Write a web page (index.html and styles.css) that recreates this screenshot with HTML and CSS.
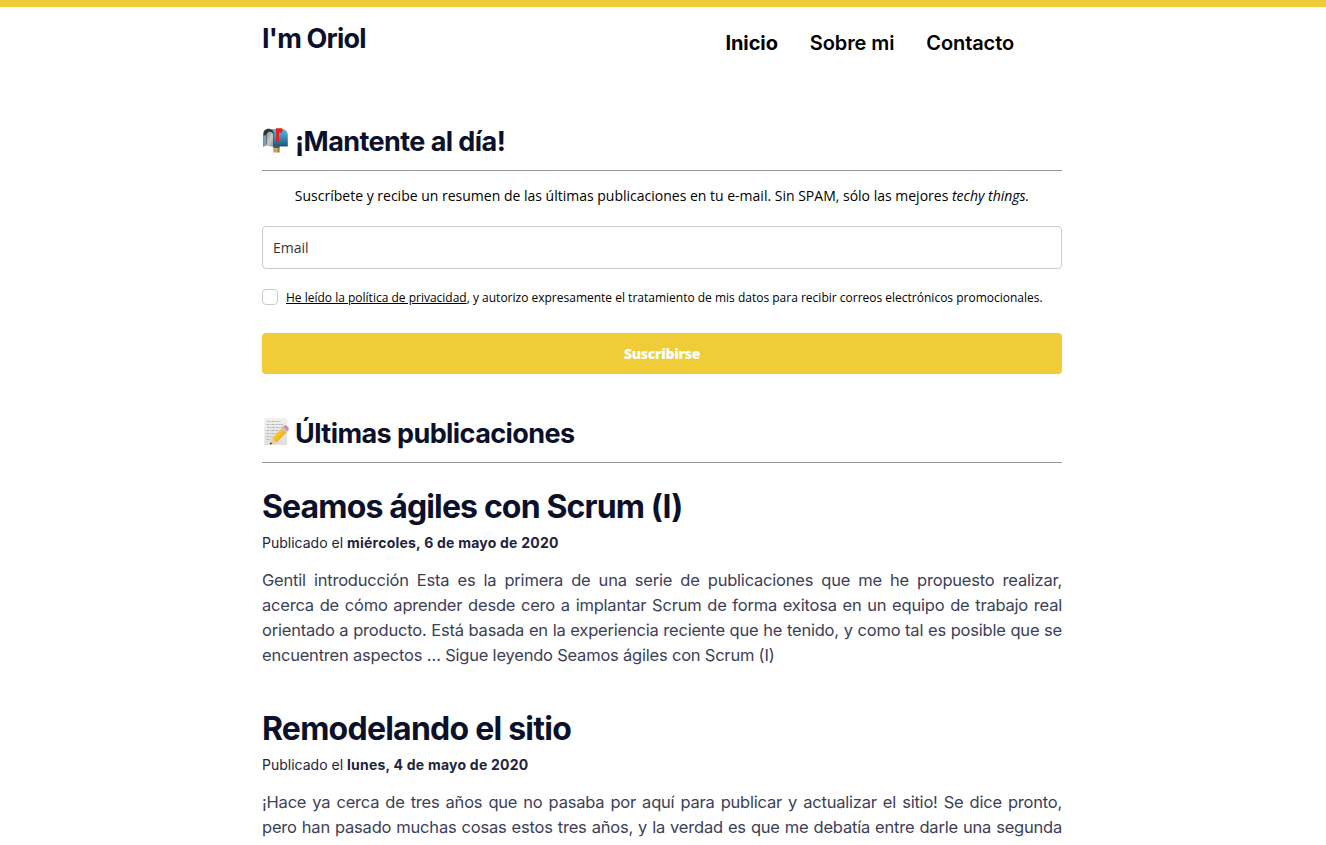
FILE: index.html
```html
<!DOCTYPE html>
<html lang="es">
<head>
<meta charset="utf-8">
<title>I'm Oriol</title>
<link rel="stylesheet" href="styles.css">
</head>
<body>
<div class="page">
  <header class="header">
    <a class="brand">I'm Oriol</a>
    <nav class="nav"><a class="current">Inicio</a><a class="about">Sobre mi</a><a class="contact">Contacto</a></nav>
  </header>
  <main>
    <section class="subscribe">
      <h2 class="section-title">
        <svg class="emoji" viewBox="0 0 28 28" aria-hidden="true">
          <defs>
            <linearGradient id="box" x1="0" y1="0" x2="0" y2="1"><stop offset="0" stop-color="#62b4d9"/><stop offset=".45" stop-color="#3f92bd"/><stop offset="1" stop-color="#195578"/></linearGradient>
            <linearGradient id="door" x1="0" y1="0" x2="1" y2="1"><stop offset="0" stop-color="#8d9295"/><stop offset=".55" stop-color="#c5cbce"/><stop offset="1" stop-color="#8b9194"/></linearGradient>
            <linearGradient id="post" x1="0" y1="0" x2="1" y2="0"><stop offset="0" stop-color="#b88d50"/><stop offset=".5" stop-color="#d6ad6c"/><stop offset="1" stop-color="#8e6229"/></linearGradient>
          </defs>
          <path fill="url(#post)" d="M11.500 20h6v6.500h-6z"/>
          <path fill="#75552e" d="M11.500 20h6v2h-6z"/>
          <path fill="url(#box)" d="M7 3h12.500c4 0 6.300 2.700 6.300 6.500V20.500H11V9C11 5.500 9.500 3.500 7 3z"/>
          <path fill="#303437" d="M1.300 20.700V8.500C1.300 5 3.400 2.800 6.500 2.800S11.800 5 11.800 8.500v12.200L6 18z"/>
          <path fill="#6ca9c0" d="M1.300 10l2.700-1v10.200l-2.700 1.500z"/>
          <path fill="url(#door)" d="M4.500 20V9.200C4.500 7 6 5.800 7.800 5.800S11.300 7 11.300 9.500v11.200z"/>
          <path fill="#ee211a" d="M14 2.200h6.300v4.300H17v8.200c0 1.800-3 1.800-3 0z"/>
        </svg>
        <span class="subscribe-title">¡Mantente al día!</span>
      </h2>
      <p class="intro">Suscríbete y recibe un resumen de las últimas publicaciones en tu e-mail. Sin SPAM, sólo las mejores <em>techy things.</em></p>
      <form>
        <input class="email" type="text" placeholder="Email" aria-label="Email">
        <label class="consent"><input class="check" type="checkbox"><span><a>He leído la política de privacidad</a>, y autorizo expresamente el tratamiento de mis datos para recibir correos electrónicos promocionales.</span></label>
        <button class="submit" type="button">Suscribirse</button>
      </form>
    </section>
    <section class="latest">
      <h2 class="section-title">
        <svg class="emoji" viewBox="0 0 28 28" aria-hidden="true">
          <defs>
            <linearGradient id="paper" x1="0" y1="0" x2="0" y2="1"><stop offset="0" stop-color="#f1f1ef"/><stop offset="1" stop-color="#dededd"/></linearGradient>
            <linearGradient id="pencil" x1="0" y1="0" x2="1" y2="1"><stop offset="0" stop-color="#ffe45c"/><stop offset=".5" stop-color="#f7bd28"/><stop offset="1" stop-color="#d88714"/></linearGradient>
          </defs>
          <path fill="url(#paper)" d="M2.300 0h22.800v27H2.300z"/>
          <path stroke="#aaa" stroke-width=".8" stroke-dasharray="2.500 .8 1.200 .5 3 1" fill="none" d="M5 3.500h14M4.500 6.500H21M5 9.500h15M4.500 12.500H17M4.500 15.500h10M4.500 18.500h6M4.500 21.500h4"/>
          <path fill="url(#pencil)" d="M10 20L20.500 9.300l4.700 4.500L14.500 24.500z"/>
          <path fill="#bdc5c8" d="M19.300 10.500l2.200-2.300 4.800 4.600-2.300 2.300z"/>
          <path fill="#e5868e" d="M21 8.700l1-1c2-1.500 5.600 2 4.700 3.800l-1.100 1.600z"/>
          <path fill="#edcb91" d="M10 20l4.500 4.500-6.500 1.900z"/>
          <path fill="#333" d="M8.600 24.300l1.500 1.500-2.500.8z"/>
        </svg>
        <span class="latest-title">Últimas publicaciones</span>
      </h2>
      <article class="post">
        <h1 class="post-title first">Seamos ágiles con Scrum (I)</h1>
        <p class="meta">Publicado el <strong>miércoles, 6 de mayo de 2020</strong></p>
        <p class="excerpt"><span class="line full">Gentil introducción Esta es la primera de una serie de publicaciones que me he propuesto realizar,</span> <span class="line full">acerca de cómo aprender desde cero a implantar Scrum de forma exitosa en un equipo de trabajo real</span> <span class="line full">orientado a producto. Está basada en la experiencia reciente que he tenido, y como tal es posible que se</span> <span class="line">encuentren aspectos … Sigue leyendo Seamos ágiles con Scrum (I)</span></p>
      </article>
      <article class="post last">
        <h1 class="post-title">Remodelando el sitio</h1>
        <p class="meta">Publicado el <strong>lunes, 4 de mayo de 2020</strong></p>
        <p class="excerpt"><span class="line full">¡Hace ya cerca de tres años que no pasaba por aquí para publicar y actualizar el sitio! Se dice pronto,</span> <span class="line full">pero han pasado muchas cosas estos tres años, y la verdad es que me debatía entre darle una segunda</span></p>
      </article>
    </section>
  </main>
</div>
</body>
</html>
```

FILE: styles.css
```css
* { box-sizing: border-box; }
body { margin: 0; border-top: 7px solid #efcc38; background: #fff; color: #000; font-family: Inter, "Liberation Sans", sans-serif; }
.page { width: 800px; margin-left: 262px; }
.header { display: flex; justify-content: space-between; height: 93px; padding: 14px 48px 0 0; }
.brand { font-size: 27px; font-weight: 700; line-height: 36px; letter-spacing: -0.8px; color: #0c112b; }
.nav { display: flex; gap: 32px; padding-top: 7px; font-size: 20px; font-weight: 600; line-height: 30px; letter-spacing: -0.1px; }
.current { font-weight: 700; letter-spacing: -0.1px; }
h1, h2, p { margin: 0; }
.section-title { display: flex; align-items: center; gap: 5px; height: 71px; padding-top: 14px; border-bottom: 1px solid #999; color: #0c112b; font-size: 27px; font-weight: 700; line-height: 36px; letter-spacing: -0.57px; }
.emoji { width: 28px; height: 28px; flex: none; margin-top: -4px; }
.intro { padding-top: 14px; text-align: center; font-family: "Open Sans", sans-serif; font-size: 14px; line-height: 22px; white-space: nowrap; }
.email { display: block; width: 800px; height: 43px; margin-top: 19px; padding: 0 10px; border: 1px solid #ccc; border-radius: 4px; outline: 0; font: 14px "Open Sans", sans-serif; }
.email::placeholder { color: #333; opacity: 1; }
.consent { display: flex; gap: 8px; height: 18px; margin-top: 20px; font-family: "Open Sans", sans-serif; font-size: 12px; line-height: 18px; white-space: nowrap; }
.consent a { text-decoration: underline; }
.check { appearance: none; width: 16px; height: 16px; margin: 0; border: 1px solid #ccc; border-radius: 4px; flex: none; }
.submit { display: block; width: 800px; height: 41px; margin-top: 26px; border: 0; border-radius: 4px; background: #efcc38; color: #fff; font: 800 14px "Open Sans", sans-serif; letter-spacing: -0.3px; }
.latest { padding-top: 18px; }
.post { height: 222px; padding-top: 21px; }
.last { height: auto; }
.post-title { color: #0c112b; font-size: 32px; font-weight: 700; line-height: 46px; letter-spacing: -0.76px; white-space: nowrap; }
.first { letter-spacing: -0.86px; }
.meta { padding-top: 2px; color: #22243d; font-size: 14px; line-height: 22px; letter-spacing: 0; }
.meta strong { font-weight: 700; letter-spacing: 0.23px; }
.excerpt { padding-top: 14px; color: #3d4058; font-size: 16.5px; line-height: 25px; letter-spacing: -0.21px; }
.line { display: block; white-space: nowrap; }
.full { text-align-last: justify; }
```
